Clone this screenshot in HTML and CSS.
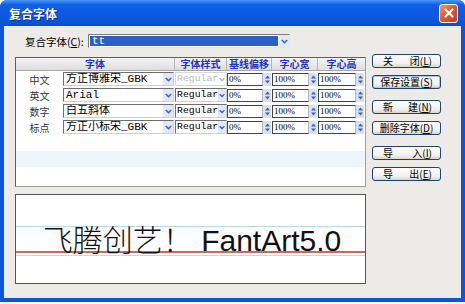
FILE: index.html
```html
<!DOCTYPE html>
<html>
<head>
  <meta charset="utf-8" />
  <title>复合字体</title>
  <link rel="stylesheet" href="styles.css">
</head>
<body>
  <div class="window">
    <div class="titlebar">
      <span class="title">复合字体</span>
      <span class="close">
        <svg width="16" height="16" viewBox="0 0 16 16"><path d="M4.5 4.5l7 7M11.5 4.5l-7 7" stroke="#fff" stroke-width="2.2" stroke-linecap="round"/></svg>
      </span>
    </div>

    <div class="client">
      <div class="combo-row">
        <label class="combo-label">复合字体(<u>C</u>):</label>
        <div class="select main-select">
          <span class="sel-text">tt</span>
          <span class="arrow"><svg width="9" height="11" viewBox="0 0 9 11"><path d="M1.8 4l2.7 2.7L7.2 4" stroke="#4a63a8" stroke-width="1.6" fill="none"/></svg></span>
        </div>
      </div>

      <div class="main">
        <div class="left">
          <div class="table">
            <div class="thead">
              <div class="th wide">字体</div>
              <div class="th">字体样式</div>
              <div class="th">基线偏移</div>
              <div class="th">字心宽</div>
              <div class="th last">字心高</div>
            </div>

            <div class="row">
              <div class="lbl">中文</div>
              <div class="select font"><span class="sel-text">方正博雅宋_GBK</span><span class="arrow"><svg width="9" height="11" viewBox="0 0 9 11"><path d="M1.8 4l2.7 2.7L7.2 4" stroke="#4a63a8" stroke-width="1.6" fill="none"/></svg></span></div>
              <div class="select style disabled"><span class="sel-text">Regular</span><span class="arrow"><svg width="9" height="11" viewBox="0 0 9 11"><path d="M1.8 4l2.7 2.7L7.2 4" stroke="#b8b8b8" stroke-width="1.6" fill="none"/></svg></span></div>
              <div class="num"><span class="val">0%</span><span class="spin"><svg width="7" height="11" viewBox="0 0 7 11"><path d="M3.5 1.5L6 4.5H1zM3.5 9.5L6 6.5H1z" fill="#4a63a8"/></svg></span></div>
              <div class="num"><span class="val">100%</span><span class="spin"><svg width="7" height="11" viewBox="0 0 7 11"><path d="M3.5 1.5L6 4.5H1zM3.5 9.5L6 6.5H1z" fill="#4a63a8"/></svg></span></div>
              <div class="num"><span class="val">100%</span><span class="spin"><svg width="7" height="11" viewBox="0 0 7 11"><path d="M3.5 1.5L6 4.5H1zM3.5 9.5L6 6.5H1z" fill="#4a63a8"/></svg></span></div>
            </div>

            <div class="row">
              <div class="lbl">英文</div>
              <div class="select font"><span class="sel-text">Arial</span><span class="arrow"><svg width="9" height="11" viewBox="0 0 9 11"><path d="M1.8 4l2.7 2.7L7.2 4" stroke="#4a63a8" stroke-width="1.6" fill="none"/></svg></span></div>
              <div class="select style"><span class="sel-text">Regular</span><span class="arrow"><svg width="9" height="11" viewBox="0 0 9 11"><path d="M1.8 4l2.7 2.7L7.2 4" stroke="#4a63a8" stroke-width="1.6" fill="none"/></svg></span></div>
              <div class="num"><span class="val">0%</span><span class="spin"><svg width="7" height="11" viewBox="0 0 7 11"><path d="M3.5 1.5L6 4.5H1zM3.5 9.5L6 6.5H1z" fill="#4a63a8"/></svg></span></div>
              <div class="num"><span class="val">100%</span><span class="spin"><svg width="7" height="11" viewBox="0 0 7 11"><path d="M3.5 1.5L6 4.5H1zM3.5 9.5L6 6.5H1z" fill="#4a63a8"/></svg></span></div>
              <div class="num"><span class="val">100%</span><span class="spin"><svg width="7" height="11" viewBox="0 0 7 11"><path d="M3.5 1.5L6 4.5H1zM3.5 9.5L6 6.5H1z" fill="#4a63a8"/></svg></span></div>
            </div>

            <div class="row">
              <div class="lbl">数字</div>
              <div class="select font"><span class="sel-text">白五斜体</span><span class="arrow"><svg width="9" height="11" viewBox="0 0 9 11"><path d="M1.8 4l2.7 2.7L7.2 4" stroke="#4a63a8" stroke-width="1.6" fill="none"/></svg></span></div>
              <div class="select style"><span class="sel-text">Regular</span><span class="arrow"><svg width="9" height="11" viewBox="0 0 9 11"><path d="M1.8 4l2.7 2.7L7.2 4" stroke="#4a63a8" stroke-width="1.6" fill="none"/></svg></span></div>
              <div class="num"><span class="val">0%</span><span class="spin"><svg width="7" height="11" viewBox="0 0 7 11"><path d="M3.5 1.5L6 4.5H1zM3.5 9.5L6 6.5H1z" fill="#4a63a8"/></svg></span></div>
              <div class="num"><span class="val">100%</span><span class="spin"><svg width="7" height="11" viewBox="0 0 7 11"><path d="M3.5 1.5L6 4.5H1zM3.5 9.5L6 6.5H1z" fill="#4a63a8"/></svg></span></div>
              <div class="num"><span class="val">100%</span><span class="spin"><svg width="7" height="11" viewBox="0 0 7 11"><path d="M3.5 1.5L6 4.5H1zM3.5 9.5L6 6.5H1z" fill="#4a63a8"/></svg></span></div>
            </div>

            <div class="row">
              <div class="lbl">标点</div>
              <div class="select font"><span class="sel-text">方正小标宋_GBK</span><span class="arrow"><svg width="9" height="11" viewBox="0 0 9 11"><path d="M1.8 4l2.7 2.7L7.2 4" stroke="#4a63a8" stroke-width="1.6" fill="none"/></svg></span></div>
              <div class="select style"><span class="sel-text">Regular</span><span class="arrow"><svg width="9" height="11" viewBox="0 0 9 11"><path d="M1.8 4l2.7 2.7L7.2 4" stroke="#4a63a8" stroke-width="1.6" fill="none"/></svg></span></div>
              <div class="num"><span class="val">0%</span><span class="spin"><svg width="7" height="11" viewBox="0 0 7 11"><path d="M3.5 1.5L6 4.5H1zM3.5 9.5L6 6.5H1z" fill="#4a63a8"/></svg></span></div>
              <div class="num"><span class="val">100%</span><span class="spin"><svg width="7" height="11" viewBox="0 0 7 11"><path d="M3.5 1.5L6 4.5H1zM3.5 9.5L6 6.5H1z" fill="#4a63a8"/></svg></span></div>
              <div class="num"><span class="val">100%</span><span class="spin"><svg width="7" height="11" viewBox="0 0 7 11"><path d="M3.5 1.5L6 4.5H1zM3.5 9.5L6 6.5H1z" fill="#4a63a8"/></svg></span></div>
            </div>

            <div class="blank"></div>
            <div class="blank tint"></div>
            <div class="blank"></div>
          </div>

          <div class="preview">
            <div class="sample">飞腾创艺！ FantArt5.0</div>
          </div>
        </div>

        <div class="buttons">
          <div class="group">
            <button class="btn split"><span>关</span><span>闭(<u>L</u>)</span></button>
            <button class="btn default">保存设置(<u>S</u>)</button>
          </div>
          <div class="group">
            <button class="btn split"><span>新</span><span>建(<u>N</u>)</span></button>
            <button class="btn">删除字体(<u>D</u>)</button>
          </div>
          <div class="group">
            <button class="btn split"><span>导</span><span>入(<u>I</u>)</span></button>
            <button class="btn split"><span>导</span><span>出(<u>E</u>)</span></button>
          </div>
        </div>
      </div>
    </div>
  </div>
</body>
</html>
```

FILE: styles.css
```css
body {
  margin: 0;
  background: #fff;
  font-family: "Noto Sans CJK SC", "Liberation Sans", sans-serif;
  font-size: 11px;
}
.window {
  width: 465px;
  height: 302px;
  box-sizing: border-box;
  display: flex;
  flex-direction: column;
  background: #0b55dc;
  border-radius: 7px 7px 0 0;
  overflow: hidden;
}
.titlebar {
  height: 26px;
  flex: none;
  display: flex;
  align-items: center;
  justify-content: space-between;
  padding: 0 7px 0 9px;
  background: linear-gradient(#4a98f8, #0f5fe6 18%, #0a58df 70%, #0a4fcf);
}
.title {
  color: #fff;
  font-weight: bold;
  font-size: 12px;
  text-shadow: 1px 1px 0 #0a2f8a;
}
.close {
  width: 17px;
  height: 17px;
  border: 1px solid #fff;
  border-radius: 3px;
  background: linear-gradient(135deg, #f09a78, #e0552c 50%, #c8401a);
  display: flex;
  align-items: center;
  justify-content: center;
}
.client {
  flex: 1;
  margin: 0 4px 4px;
  background: #ecebe7;
  padding: 8px 0 0 11px;
}
.combo-row {
  display: flex;
  align-items: center;
  height: 14px;
  padding-left: 10px;
}
.combo-label {
  width: 63px;
  color: #000;
  font-size: 10.5px;
}
.select {
  display: flex;
  align-items: center;
  height: 14px;
  box-sizing: border-box;
  background: #fff;
  border: 1px solid;
  border-color: #6f6f6f #d0d0d0 #d0d0d0 #6f6f6f;
}
.select .sel-text {
  flex: 1;
  overflow: hidden;
  white-space: nowrap;
  padding-left: 2px;
  font-family: "Liberation Mono", "Noto Sans CJK SC", monospace;
  font-size: 11px;
  line-height: 12px;
  color: #000;
}
.select .arrow {
  width: 10px;
  height: 12px;
  display: flex;
  align-items: center;
  justify-content: center;
  background: #dfe8fb;
}
.main-select {
  width: 202px;
  border-color: #7f7f7f #e5e5e5 #e5e5e5 #7f7f7f;
}
.main-select .sel-text {
  background: #2e5fc8;
  color: #fff;
  margin: 1px;
  height: 10px;
  line-height: 10px;
}
.main {
  display: flex;
  margin-top: 6px;
  gap: 6px;
}
.left {
  width: 351px;
  padding-top: 3px;
}
.table {
  height: 130px;
  box-sizing: border-box;
  border: 1px solid;
  border-color: #5e5e5e #a0a0a0 #a0a0a0 #5e5e5e;
  background: #fff;
  overflow: hidden;
}
.thead,
.row {
  display: grid;
  grid-template-columns: 47px 112px 52px 45px 46px 47px;
}
.thead {
  height: 12px;
  background: linear-gradient(#f4f4f4, #dedede);
  border-bottom: 1px solid #a8a8a8;
}
.th {
  text-align: center;
  color: #2233c4;
  font-size: 10px;
  line-height: 12px;
  font-weight: bold;
  border-right: 1px solid #b4b4b4;
}
.th.wide {
  grid-column: span 2;
}
.th.last {
  border-right: none;
}
.row {
  height: 16px;
  align-items: center;
}
.lbl {
  text-align: center;
  color: #333;
  font-size: 10px;
}
.select.font {
  margin-right: 1px;
}
.select.style .sel-text {
  padding-left: 1px;
  font-size: 9.8px;
  text-overflow: clip;
}
.select.style .arrow {
  width: 8px;
}
.select.disabled {
  border-color: #d8d8d8;
}
.select.disabled .sel-text {
  color: #bcbcbc;
}
.select.disabled .arrow {
  background: #fff;
}
.num {
  display: flex;
  align-items: center;
  height: 13px;
  padding-right: 1px;
}
.num .val {
  flex: 1;
  height: 13px;
  box-sizing: border-box;
  border: 1px solid;
  border-color: #444 #bbb #444 #444;
  font-family: "Liberation Serif", serif;
  font-size: 9px;
  line-height: 11px;
  padding-left: 1px;
  color: #000;
}
.num .spin {
  width: 8px;
  height: 13px;
  display: flex;
  align-items: center;
  justify-content: center;
  background: #d5e1f7;
}
.blank {
  height: 16px;
}
.blank.tint {
  background: #eef4fb;
}
.preview {
  margin-top: 7px;
  height: 90px;
  box-sizing: border-box;
  border: 1px solid #555;
  background:
    linear-gradient(#b9dbe8, #b9dbe8) 0 31px / 100% 1px no-repeat,
    linear-gradient(#c86a5a, #c86a5a) 0 56px / 100% 2px no-repeat,
    linear-gradient(#b9dbe8, #b9dbe8) 0 60px / 100% 1px no-repeat,
    #fff;
}
.sample {
  text-align: center;
  font-family: "Liberation Sans", "Noto Sans CJK SC", sans-serif;
  font-weight: 300;
  font-size: 30px;
  line-height: 30px;
  padding-top: 31px;
  padding-left: 3px;
  color: #111;
  white-space: nowrap;
}
.buttons {
  width: 69px;
  display: flex;
  flex-direction: column;
  gap: 11px;
}
.group {
  display: flex;
  flex-direction: column;
  gap: 7px;
}
.btn {
  height: 14px;
  width: 69px;
  padding: 0 6px;
  display: flex;
  align-items: center;
  justify-content: center;
  box-sizing: border-box;
  border: 1px solid #23406e;
  border-radius: 3px;
  background: linear-gradient(#ffffff, #f1f0ea 70%, #d9d5c8);
  font-family: "Noto Sans CJK SC", sans-serif;
  font-size: 10px;
  line-height: 12px;
  color: #000;
}
.btn.split {
  justify-content: space-between;
  padding: 0 8px 0 10px;
}
.btn.default {
  box-shadow: inset 0 0 0 1px #a9c4f0;
}
```
